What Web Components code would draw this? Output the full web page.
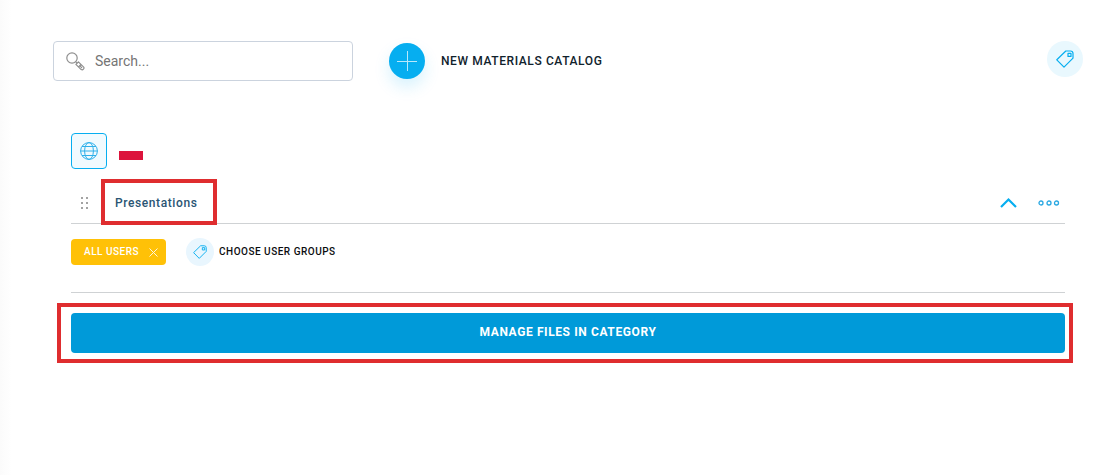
<!DOCTYPE html>
<html lang="en">
<head>
<meta charset="utf-8">
<title>Materials catalog</title>
<style>
  body { margin: 0; background: #fff; font-family: Roboto, "Liberation Sans", sans-serif; color: #10222c; --tracking: 0.05em; }
</style>
</head>
<body>
<materials-page></materials-page>
<script>
const define = (name, html) => {
  const t = document.createElement('template');
  t.innerHTML = '<style>:host,*{box-sizing:border-box}button{font:inherit;color:inherit;letter-spacing:inherit;border:0;padding:0;margin:0;background:none;cursor:pointer}</style>' + html;
  customElements.define(name, class extends HTMLElement {
    constructor() {
      super();
      this.attachShadow({ mode: 'open' }).append(t.content.cloneNode(true));
    }
  });
};

define('tag-icon', `
<style>
  :host { display: block; width: 18px; height: 18px; }
  svg { display: block; width: 100%; height: 100%; }
</style>
<svg viewBox="0 0 18 18" fill="none" stroke="#06aef0" stroke-width="1.2" stroke-linejoin="round" aria-hidden="true">
  <path d="M.8 9.8 9.8 1H14.5Q17 1 17 3.5V8.2L8 17.2Z"/><path d="M12 3.4H15V6.4H12Z"/>
</svg>`);

define('search-field', `
<style>
  :host { display: block; }
  label { display: flex; align-items: center; gap: 10px; height: 40px; padding: 0 12px; border: 1px solid #cbd3de; border-radius: 4px; background: #fff; }
  input { flex: 1; min-width: 0; border: 0; outline: 0; padding: 0; background: none; font: 14px/20px Roboto, "Liberation Sans", sans-serif; color: #333; }
  input::placeholder { color: #757575; opacity: 1; }
  svg { width: 19px; height: 19px; flex: none; }
</style>
<label>
  <svg viewBox="0 0 19 19" fill="none" stroke="#8f8f8f" stroke-width="1.2" stroke-linejoin="round" aria-hidden="true">
    <circle cx="6" cy="6" r="5.2"/><path d="M9.8 9.8 11.3 11.3"/>
    <path d="M9.9 12.3 12.4 9.8 17.7 15.1Q18.4 16 17.4 17.2T15.2 17.6ZM12.6 14.8 14.9 12.5M14.2 14.2 16 16"/>
  </svg>
  <input type="search" placeholder="Search..." aria-label="Search">
</label>`);

define('new-catalog-button', `
<style>
  :host { display: block; }
  button { display: flex; align-items: center; gap: 16px; font-size: 12px; line-height: 16px; font-weight: 500; letter-spacing: var(--tracking); white-space: nowrap; }
  .plus { width: 36px; height: 36px; border-radius: 50%; background: #06aef0; box-shadow: 0 8px 16px rgba(6,174,240,.16); }
  svg { display: block; }
</style>
<button type="button"><span class="plus"><svg width="36" height="36" stroke="#b9e8fb" aria-hidden="true"><path d="M8 18.5H28M18.5 8V28"/></svg></span><slot></slot></button>`);

define('round-tag', `
<style>
  :host { display: block; }
  button { display: grid; place-items: center; width: 36px; height: 36px; border-radius: 50%; background: #e9f8fe; }
</style>
<button type="button" aria-label="Tags"><tag-icon></tag-icon></button>`);

define('top-bar', `
<style>
  :host { display: flex; align-items: center; height: 40px; padding: 0 20px 0 53px; }
  search-field { flex: 0 1 300px; margin-right: 36px; }
  round-tag { margin-left: auto; align-self: flex-start; }
</style>
<search-field></search-field><new-catalog-button>NEW MATERIALS CATALOG</new-catalog-button><round-tag></round-tag>`);

define('language-bar', `
<style>
  :host { display: flex; align-items: center; gap: 12px; }
  .globe { display: grid; place-items: center; width: 36px; height: 36px; border: 1px solid #06aef0; border-radius: 4px; background: #f1fafe; }
  svg { display: block; }
</style>
<button class="globe" type="button" aria-label="All languages">
  <svg width="18" height="18" viewBox="0 0 18 18" fill="none" stroke="#2fb0ea" aria-hidden="true">
    <circle cx="9" cy="9" r="8.4"/><ellipse cx="9" cy="9" rx="4.4" ry="8.4"/><path d="M.6 9H17.4M2 4.5H16M2 13.5H16"/>
  </svg>
</button>
<button type="button" aria-label="Polish"><svg width="24" height="18" aria-hidden="true"><path fill="#fff" d="M0 0H24V9H0Z"/><path fill="#dc143c" d="M0 9H24V18H0Z"/></svg></button>`);

define('callout-frame', `
<style>
  :host { display: block; position: relative; }
  .frame { position: absolute; inset: var(--reach); border: 4px solid #df2d2f; pointer-events: none; }
</style>
<slot></slot><div class="frame"></div>`);

define('category-header', `
<style>
  :host { display: flex; align-items: center; height: 42px; padding: 0 5px 0 9px; border-bottom: 1px solid #cfd2d4; }
  .name { display: block; font-size: 12px; line-height: 20px; font-weight: 500; letter-spacing: var(--tracking); color: #2a5574; }
  callout-frame { margin-left: 25px; --reach: -14px -20px -12px -14px; }
  .actions { display: flex; align-items: center; gap: 21px; margin-left: auto; }
  svg { display: block; }
</style>
<button type="button" aria-label="Move"><svg width="10" height="14" fill="#a3a3a3" aria-hidden="true"><path d="M1 1h2v2H1zM6 1h2v2H6zM1 6h2v2H1zM6 6h2v2H6zM1 11h2v2H1zM6 11h2v2H6z"/></svg></button>
<callout-frame><button type="button" class="name"><slot></slot></button></callout-frame>
<div class="actions">
  <button type="button" aria-label="Collapse"><svg width="18" height="12" fill="none" stroke="#06aef0" stroke-width="2.2" aria-hidden="true"><path d="M2 10 9.5 2.5 17 10"/></svg></button>
  <button type="button" aria-label="More"><svg width="22" height="8" fill="none" stroke="#2aa8e2" stroke-width="1.3" aria-hidden="true"><circle cx="3" cy="4" r="2"/><circle cx="11" cy="4" r="2"/><circle cx="18.5" cy="4" r="2"/></svg></button>
</div>`);

define('group-chip', `
<style>
  :host { display: flex; align-items: center; gap: 10px; height: 26px; padding: 0 8px 0 13px; border-radius: 4px; background: #ffc107; color: #fff; font-size: 10px; line-height: 16px; font-weight: 500; letter-spacing: var(--tracking); white-space: nowrap; }
  svg { display: block; }
</style>
<span><slot></slot></span><button type="button" aria-label="Remove"><svg width="9" height="9" stroke="#fff6dc" aria-hidden="true"><path d="M.5 .5 8.5 8.5M8.5 .5 .5 8.5"/></svg></button>`);

define('choose-groups', `
<style>
  :host { display: block; }
  button { display: flex; align-items: center; gap: 5px; font-size: 10px; line-height: 16px; font-weight: 500; letter-spacing: var(--tracking); color: #0b0d0f; white-space: nowrap; }
  .round { display: grid; place-items: center; width: 28px; height: 28px; border-radius: 50%; background: #e9f6fe; }
  tag-icon { width: 14px; height: 14px; }
</style>
<button type="button"><span class="round"><tag-icon></tag-icon></span><slot></slot></button>`);

define('manage-button', `
<style>
  :host { display: block; }
  button { display: block; width: 100%; height: 40px; padding-bottom: 2px; border-radius: 4px; background: #009ad9; color: #fff; font-size: 12px; line-height: 16px; font-weight: 700; letter-spacing: var(--tracking); box-shadow: 0 -22px 24px -20px rgba(0,154,217,.26); }
</style>
<button type="button"><slot></slot></button>`);

define('catalog-category', `
<style>
  :host { display: block; }
  .groups { display: flex; align-items: center; gap: 20px; height: 69px; padding-bottom: 12px; border-bottom: 1px solid #cfd2d4; }
  .manage { margin-top: 20px; --reach: -10px -8px -10px -14px; }
</style>
<category-header>Presentations</category-header>
<div class="groups"><group-chip>ALL USERS</group-chip><choose-groups>CHOOSE USER GROUPS</choose-groups></div>
<callout-frame class="manage"><manage-button>MANAGE FILES IN CATEGORY</manage-button></callout-frame>`);

define('materials-page', `
<style>
  :host { display: block; min-height: 100vh; padding-top: 41px; background: linear-gradient(90deg, #fbfbfb, #fff 12px); }
  main { padding: 52px 38px 40px 71px; }
  catalog-category { margin-top: 13px; }
</style>
<top-bar></top-bar>
<main><language-bar></language-bar><catalog-category></catalog-category></main>`);
</script>
</body>
</html>
